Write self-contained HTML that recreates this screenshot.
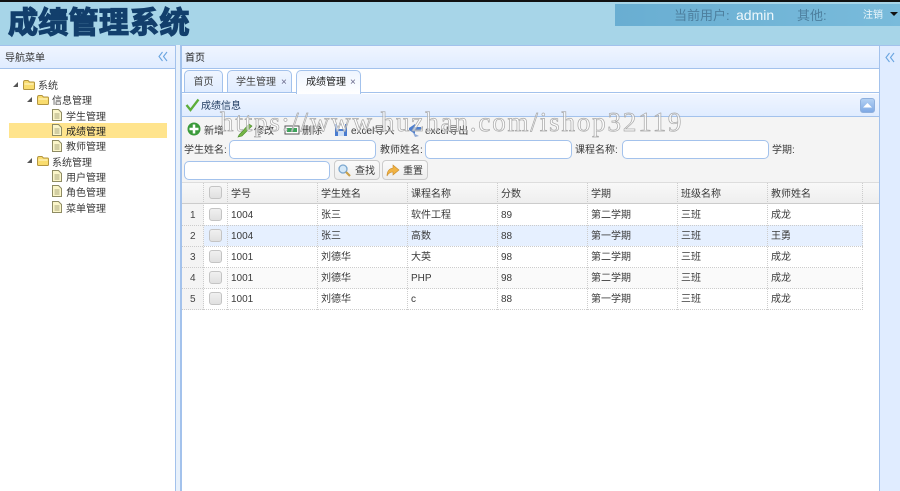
<!DOCTYPE html>
<html lang="zh"><head><meta charset="utf-8"><title>成绩管理系统</title>
<style>
html,body{margin:0;padding:0;overflow:hidden;height:491px}
body{width:900px;position:relative;background:#e8f1fb;font-family:"Liberation Sans","Noto Sans CJK SC",sans-serif;font-size:10px;color:#3a3a3a;filter:blur(.3px)}
div,span,svg{position:absolute;box-sizing:border-box}
.t{white-space:nowrap;line-height:14px;margin-top:2px}
.hd{background:linear-gradient(#eff5ff,#e0ecff);border:1px solid #a3c2ec}
.tab{top:70px;height:23px;background:linear-gradient(#eff5ff,#e0ecff);border:1px solid #a3c2ec;border-radius:5px 5px 0 0;text-align:center;line-height:24px;color:#444}
.inp{height:19px;background:#fff;border:1px solid #a3c2ec;border-radius:5px}
.btn{height:20px;top:160px;border:1px solid #ccc;border-radius:4px;background:linear-gradient(#fafafa,#eee)}
.r{left:182px;width:681px;height:21px;border-bottom:1px dotted #ccc}
.v{top:183px;width:1px;height:127px;border-left:1px dotted #ccc}
.cb{left:209px;width:13px;height:13px;border:1px solid #c4c4c4;border-radius:3px;background:linear-gradient(#f0f0f0,#e0e0e0)}
</style></head><body>
<div style="left:0;top:0;width:900px;height:2px;background:#111"></div>
<div style="left:0;top:2px;width:900px;height:43px;background:#a7d5e8"></div>
<div class="t" style="left:8px;top:2px;font-size:30px;line-height:40px;font-weight:700;color:#123f6c;letter-spacing:.3px;-webkit-text-stroke:1.3px #123f6c">成绩管理系统</div>
<div style="left:615px;top:4px;width:285px;height:22px;background:linear-gradient(90deg,#69aed2,#79bbdb)"></div>
<div class="t" style="left:674px;top:6px;font-size:13px;line-height:16px;color:#4d7f9e">当前用户:</div>
<div class="t" style="left:736px;top:5px;font-size:14px;line-height:17px;color:#eef8fc">admin</div>
<div class="t" style="left:797px;top:6px;font-size:13px;line-height:16px;color:#4d7f9e">其他:</div>
<div class="t" style="left:863px;top:7px;color:#eef8fc">注销</div>
<svg style="left:890px;top:12px" width="9" height="5"><path d="M0 0H8L4 4Z" fill="#111"/></svg>

<!-- left panel -->
<div style="left:0;top:45px;width:176px;height:446px;background:#fff;border:1px solid #a3c2ec;border-left:0;border-bottom:0"></div>
<div class="hd" style="left:0;top:45px;width:176px;height:24px;border-left:0"></div>
<div class="t" style="left:5px;top:50px;color:#333">导航菜单</div>
<svg style="left:158px;top:51px" width="10" height="11" fill="none" stroke="#6aa5e0" stroke-width="1.100"><path d="M4.500 1 1 5.500 4.500 10M9 1 5.500 5.500 9 10"/></svg>
<div style="left:9px;top:123px;width:158px;height:15px;background:#ffe48d"></div>
<svg style="left:0;top:71px" width="120" height="150">
<defs>
<g id="f"><path d="M.5 3.500Q.5 1.500 2 1.500H5L6.500 3H10.500Q11.500 3 11.500 4V9.500Q11.500 10.500 10.500 10.500H1.500Q.5 10.500 .5 9.500Z" fill="#f9dc6e" stroke="#b3953f"/><path d="M1.500 5H10.500" stroke="#fff8d0"/></g>
<g id="d"><path d="M.5.500H6.500L9.500 3.500V11.500H.5Z" fill="#fbf6c9" stroke="#8e8b63"/><path d="M2.500 5H7.500M2.500 7H7.500M2.500 9H7.500" stroke="#a8a57b"/></g>
<path id="a" d="M0 5 5 0V5Z" fill="#555"/>
</defs>
<use href="#a" x="13" y="11"/><use href="#f" x="23" y="8"/>
<use href="#a" x="27" y="26"/><use href="#f" x="37" y="23"/>
<use href="#d" x="52" y="38"/><use href="#d" x="52" y="53"/><use href="#d" x="52" y="69"/>
<use href="#a" x="27" y="87"/><use href="#f" x="37" y="84"/>
<use href="#d" x="52" y="99"/><use href="#d" x="52" y="114"/><use href="#d" x="52" y="130"/>
</svg>
<div class="t" style="left:38px;top:78px">系统</div>
<div class="t" style="left:52px;top:93px">信息管理</div>
<div class="t" style="left:66px;top:109px">学生管理</div>
<div class="t" style="left:66px;top:124px;color:#222">成绩管理</div>
<div class="t" style="left:66px;top:139px">教师管理</div>
<div class="t" style="left:52px;top:155px">系统管理</div>
<div class="t" style="left:66px;top:170px">用户管理</div>
<div class="t" style="left:66px;top:185px">角色管理</div>
<div class="t" style="left:66px;top:201px">菜单管理</div>

<!-- center panel -->
<div style="left:180px;top:45px;width:700px;height:446px;background:#fff;border:1px solid #a3c2ec;border-left-width:2px;border-bottom:0"></div>
<div class="hd" style="left:180px;top:45px;width:700px;height:24px;border-left-width:2px"></div>
<div class="t" style="left:185px;top:50px;color:#222">首页</div>
<div style="left:182px;top:92px;width:697px;height:1px;background:#a3c2ec"></div>
<div class="tab" style="left:184px;width:39px">首页</div>
<div class="tab" style="left:227px;width:65px;text-align:left;padding-left:8px">学生管理<span style="left:53px;top:0;color:#668">×</span></div>
<div class="tab" style="left:296px;width:65px;height:24px;background:linear-gradient(#eff5ff,#fff);text-align:left;padding-left:9px;color:#222;border-bottom:0">成绩管理<span style="left:53px;top:0;color:#668">×</span></div>

<!-- inner panel -->
<div style="left:182px;top:94px;width:697px;height:23px;border-bottom:1px solid #a3c2ec;background:linear-gradient(#eff5ff,#e0ecff)"></div>
<svg style="left:185px;top:98px" width="15" height="14" fill="none"><path d="M1.500 7 5.500 12 13.500 1.500" stroke="#5cae3a" stroke-width="2.300"/></svg>
<div class="t" style="left:201px;top:98px;color:#1f3a5f">成绩信息</div>
<div style="left:860px;top:98px;width:15px;height:15px;background:linear-gradient(#b3d1f3,#7fa9e4);border:1px solid #8fb0dd;border-radius:3px"></div>
<svg style="left:863px;top:103px" width="9" height="5"><path d="M0 4.500 4.500 0 9 4.500Z" fill="#fff"/></svg>
<div style="left:182px;top:117px;width:697px;height:65px;background:#f4f4f4"></div>

<svg style="left:187px;top:121px" width="240" height="17">
<circle cx="7" cy="8" r="6.500" fill="#3a9a3a"/><path d="M7 3.500V12.500M2.500 8H11.500" stroke="#fff" stroke-width="2.500"/>
<path d="M52 14 62 3 65 5 55 15 51 16Z" fill="#74b545" stroke="#4b8a2c" stroke-width=".6"/>
<rect x="98" y="5" width="14" height="8" fill="#fff" stroke="#555"/><rect x="100" y="7" width="10" height="4" fill="#3da35a"/>
<rect x="148" y="3" width="12" height="12" fill="#4a7cd0"/><rect x="150" y="3" width="8" height="5" fill="#fff"/><rect x="151" y="10" width="6" height="5" fill="#cfe0f6"/>
<path d="M222 7 228 3V6H234V10H228V13L222 9Z" fill="#4d7fd0"/><path d="M226 12 232 15 228 16Z" fill="#8fa9d6"/>
</svg>
<div class="t" style="left:204px;top:123px">新增</div>
<div class="t" style="left:254px;top:123px">修改</div>
<div class="t" style="left:302px;top:123px">删除</div>
<div class="t" style="left:351px;top:123px">excel导入</div>
<div class="t" style="left:425px;top:123px">excel导出</div>

<div class="t" style="left:184px;top:142px">学生姓名:</div>
<div class="inp" style="left:229px;top:140px;width:147px"></div>
<div class="t" style="left:380px;top:142px">教师姓名:</div>
<div class="inp" style="left:425px;top:140px;width:147px"></div>
<div class="t" style="left:575px;top:142px">课程名称:</div>
<div class="inp" style="left:622px;top:140px;width:147px"></div>
<div class="t" style="left:772px;top:142px">学期:</div>
<div class="inp" style="left:184px;top:161px;width:146px"></div>
<div class="btn" style="left:334px;width:46px"></div>
<div class="btn" style="left:382px;width:46px"></div>
<svg style="left:337px;top:163px" width="15" height="15" fill="none"><circle cx="6" cy="6" r="4" fill="#d4e8f8" stroke="#7ba7cf" stroke-width="1.300"/><path d="M9 9 13 13" stroke="#c9a04a" stroke-width="2.200"/></svg>
<svg style="left:386px;top:163px" width="14" height="15"><path d="M1 13Q1 6 7 5V2L13 7 7 12V9Q3 9 1 13Z" fill="#f0b344" stroke="#c88a2a" stroke-width=".6"/></svg>
<div class="t" style="left:355px;top:163px">查找</div>
<div class="t" style="left:403px;top:163px">重置</div>

<!-- grid -->
<div style="left:182px;top:182px;width:697px;height:22px;background:linear-gradient(#f8f8f8,#eee);border-top:1px solid #ddd;border-bottom:1px solid #ccc"></div>
<div style="left:182px;top:204px;width:22px;height:106px;background:#f4f4f4"></div>
<div style="left:204px;top:225px;width:659px;height:21px;background:#e6f0ff"></div>
<div style="left:204px;top:268px;width:659px;height:21px;background:#fafafa"></div>
<div class="r" style="top:204px;height:22px"></div><div class="r" style="top:226px"></div><div class="r" style="top:247px"></div><div class="r" style="top:268px"></div><div class="r" style="top:289px"></div>
<div class="v" style="left:203px"></div>
<div class="v" style="left:227px"></div>
<div class="v" style="left:317px"></div>
<div class="v" style="left:407px"></div>
<div class="v" style="left:497px"></div>
<div class="v" style="left:587px"></div>
<div class="v" style="left:677px"></div>
<div class="v" style="left:767px"></div>
<div class="v" style="left:862px"></div>

<div class="cb" style="top:186px"></div><div class="cb" style="top:208px"></div><div class="cb" style="top:229px"></div><div class="cb" style="top:250px"></div><div class="cb" style="top:271px"></div><div class="cb" style="top:292px"></div>

<div style="left:0;top:-1px">
<div class="t" style="left:231px;top:187px">学号</div><div class="t" style="left:321px;top:187px">学生姓名</div><div class="t" style="left:411px;top:187px">课程名称</div><div class="t" style="left:501px;top:187px">分数</div><div class="t" style="left:591px;top:187px">学期</div><div class="t" style="left:681px;top:187px">班级名称</div><div class="t" style="left:771px;top:187px">教师姓名</div>

<div class="t" style="left:190px;top:208px;color:#444">1</div><div class="t" style="left:231px;top:208px">1004</div><div class="t" style="left:321px;top:208px">张三</div><div class="t" style="left:411px;top:208px">软件工程</div><div class="t" style="left:501px;top:208px">89</div><div class="t" style="left:591px;top:208px">第二学期</div><div class="t" style="left:681px;top:208px">三班</div><div class="t" style="left:771px;top:208px">成龙</div>
<div class="t" style="left:190px;top:229px;color:#444">2</div><div class="t" style="left:231px;top:229px">1004</div><div class="t" style="left:321px;top:229px">张三</div><div class="t" style="left:411px;top:229px">高数</div><div class="t" style="left:501px;top:229px">88</div><div class="t" style="left:591px;top:229px">第一学期</div><div class="t" style="left:681px;top:229px">三班</div><div class="t" style="left:771px;top:229px">王勇</div>
<div class="t" style="left:190px;top:250px;color:#444">3</div><div class="t" style="left:231px;top:250px">1001</div><div class="t" style="left:321px;top:250px">刘德华</div><div class="t" style="left:411px;top:250px">大英</div><div class="t" style="left:501px;top:250px">98</div><div class="t" style="left:591px;top:250px">第二学期</div><div class="t" style="left:681px;top:250px">三班</div><div class="t" style="left:771px;top:250px">成龙</div>
<div class="t" style="left:190px;top:271px;color:#444">4</div><div class="t" style="left:231px;top:271px">1001</div><div class="t" style="left:321px;top:271px">刘德华</div><div class="t" style="left:411px;top:271px">PHP</div><div class="t" style="left:501px;top:271px">98</div><div class="t" style="left:591px;top:271px">第二学期</div><div class="t" style="left:681px;top:271px">三班</div><div class="t" style="left:771px;top:271px">成龙</div>
<div class="t" style="left:190px;top:292px;color:#444">5</div><div class="t" style="left:231px;top:292px">1001</div><div class="t" style="left:321px;top:292px">刘德华</div><div class="t" style="left:411px;top:292px">c</div><div class="t" style="left:501px;top:292px">88</div><div class="t" style="left:591px;top:292px">第一学期</div><div class="t" style="left:681px;top:292px">三班</div><div class="t" style="left:771px;top:292px">成龙</div>
</div>

<!-- right panel -->
<div style="left:880px;top:45px;width:20px;height:446px;background:#e0ecff;border-top:1px solid #a3c2ec"></div>
<svg style="left:885px;top:52px" width="10" height="11" fill="none" stroke="#6aa5e0" stroke-width="1.100"><path d="M4.500 1 1 5.500 4.500 10M9 1 5.500 5.500 9 10"/></svg>

<!-- watermark -->
<div class="t" style="left:220px;top:104px;font-family:'Liberation Serif',serif;font-size:27px;line-height:32px;letter-spacing:1.850px;color:rgba(255,255,255,.6);-webkit-text-stroke:.7px #a8a8a8">https://www.huzhan.com/ishop32119</div>
</body></html>
